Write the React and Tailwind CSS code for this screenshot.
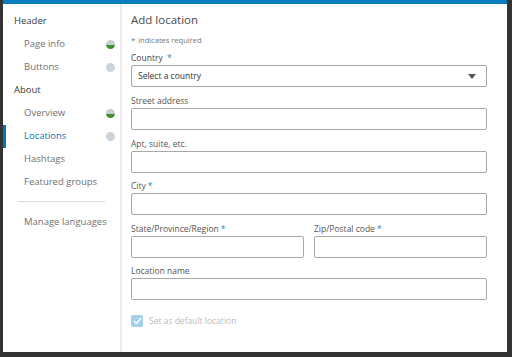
const font = { fontFamily: '"Open Sans", "Noto Sans", sans-serif' };

const navItems = [
  { label: 'Header', type: 'group' },
  { label: 'Page info', dot: 'done' },
  { label: 'Buttons', dot: 'empty' },
  { label: 'About', type: 'group' },
  { label: 'Overview', dot: 'done' },
  { label: 'Locations', dot: 'empty', active: true },
  { label: 'Hashtags' },
  { label: 'Featured groups' }
];

const Dot = ({ kind }) =>
  kind === 'done' ? (
    <span className="w-[9px] h-[9px] rounded-full overflow-hidden flex flex-col">
      <span className="h-1/2 bg-[#c5ced4]" />
      <span className="h-1/2 bg-[#3f8f2a]" />
    </span>
  ) : (
    <span className="w-[9px] h-[9px] rounded-full bg-[#cbd4da]" />
  );

const Sidebar = () => (
  <aside className="w-[119px] shrink-0 border-r-2 border-[#ececec] pt-[6px]">
    {navItems.map((item) => (
      <div
        key={item.label}
        className={`relative flex items-center justify-between h-[23px] pr-[5px] ${
          item.type === 'group' ? 'pl-[11px] text-[#3a3a3a]' : 'pl-[21px]'
        } ${item.active ? 'text-[#0b73b0]' : item.type === 'group' ? '' : 'text-[#707070]'}`}
      >
        {item.active && <span className="absolute left-0 top-0 h-full w-[3px] bg-[#0b73b0]" />}
        <span className="text-[9.5px]">{item.label}</span>
        {item.dot && <Dot kind={item.dot} />}
      </div>
    ))}
    <div className="mx-[15px] mt-[7px] mb-[9px] border-t border-[#dcdcdc]" />
    <div className="h-[23px] flex items-center pl-[21px] text-[9.5px] text-[#707070]">Manage languages</div>
  </aside>
);

const Req = () => <span className="text-[#1a86c8] ml-[2px]">*</span>;

const Field = ({ label, required, className = '' }) => (
  <div className={`flex flex-col ${className}`}>
    <label className="text-[8.5px] text-[#555] h-[14px] leading-[14px]">
      {label}
      {required && <Req />}
    </label>
    <div className="h-[22px] border border-[#a8a8a8] rounded-[2px] bg-white" />
  </div>
);

const Form = () => (
  <section className="flex-1 pl-[9px] pr-[20px] pt-[7px] flex flex-col">
    <h2 className="text-[11.5px] text-[#4a4a4a] leading-[18px]">Add location</h2>
    <p className="mt-[5px] text-[7.5px] text-[#777] leading-[12px]">
      <span className="text-[#1a86c8] mr-[3px]">*</span>indicates required
    </p>
    <div className="mt-[5px] flex flex-col">
      <label className="text-[8.5px] text-[#444] h-[14px] leading-[14px]">
        Country <Req />
      </label>
      <div className="h-[22px] border border-[#a8a8a8] rounded-[2px] flex items-center justify-between pl-[6px] pr-[10px]">
        <span className="text-[8.5px] text-[#333]">Select a country</span>
        <svg width="8" height="5" viewBox="0 0 8 5">
          <path d="M0 0h8L4 5z" fill="#555" />
        </svg>
      </div>
    </div>
    <Field label="Street address" className="mt-[7px]" />
    <Field label="Apt, suite, etc." className="mt-[6.5px]" />
    <Field label="City" required className="mt-[6.5px]" />
    <div className="mt-[6.5px] flex gap-[10px]">
      <Field label="State/Province/Region" required className="flex-1" />
      <Field label="Zip/Postal code" required className="flex-1" />
    </div>
    <Field label="Location name" className="mt-[6.5px]" />
    <div className="mt-[15px] flex items-center gap-[6px]">
      <span className="w-[12px] h-[12px] rounded-[2px] bg-[#a5d0ec] flex items-center justify-center">
        <svg width="9" height="8" viewBox="0 0 9 8">
          <path d="M1 4l2.5 2.5L8 1" stroke="#fff" strokeWidth="1.4" fill="none" />
        </svg>
      </span>
      <span className="text-[8.5px] text-[#bdbdbd]">Set as default location</span>
    </div>
  </section>
);

export default function App() {
  return (
    <div className="w-[512px] h-[357px] bg-[#333333] pl-[3px] pr-[5px] pb-[5px] overflow-hidden" style={font}>
      <div className="h-full bg-white border-t-4 border-[#0b7cbd] flex">
        <Sidebar />
        <Form />
      </div>
    </div>
  );
}
